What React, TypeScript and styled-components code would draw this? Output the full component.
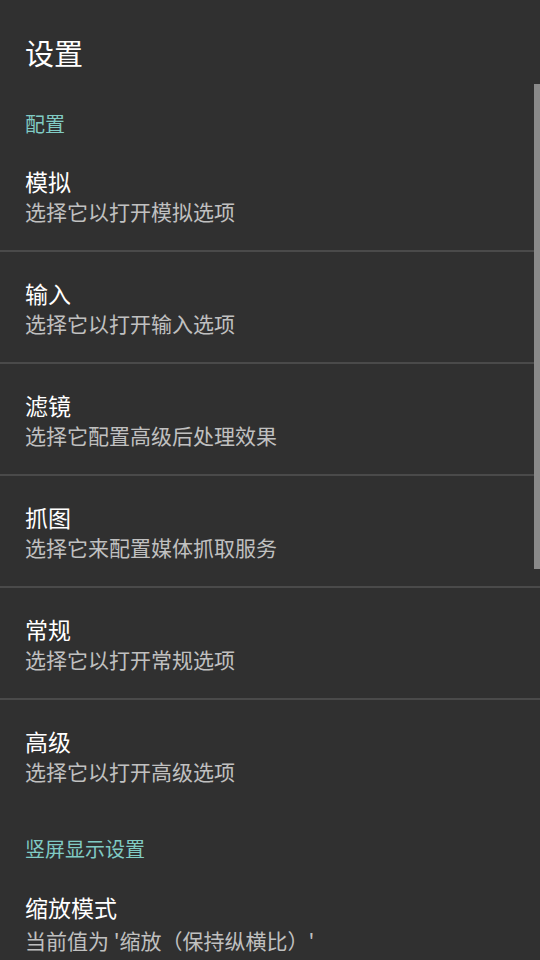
import React from "react";
import styled, { createGlobalStyle } from "styled-components";

const GlobalStyle = createGlobalStyle`
  html, body {
    margin: 0;
    padding: 0;
    background: #303030;
  }
  body {
    font-family: "Noto Sans CJK SC", "Noto Sans", Roboto, sans-serif;
    -webkit-font-smoothing: antialiased;
  }
  * { box-sizing: border-box; }
`;

const Screen = styled.div`
  width: 540px;
  height: 960px;
  overflow: hidden;
  background: #303030;
  display: flex;
  flex-direction: column;
`;

const Toolbar = styled.header`
  height: 84px;
  padding: 34px 25px 0;
  flex-shrink: 0;
`;

const Title = styled.h1`
  margin: 0;
  font-size: 29px;
  line-height: 36px;
  font-weight: 400;
  color: #ffffff;
`;

const ListWrap = styled.div`
  position: relative;
  flex: 1;
  overflow: hidden;
`;

const List = styled.div`
  display: flex;
  flex-direction: column;
`;

const ScrollThumb = styled.div`
  position: absolute;
  top: 0;
  right: 0;
  width: 6px;
  height: 485px;
  background: #8a8a8a;
`;

const CategoryTitle = styled.div`
  padding: 24.5px 25px 1px;
  font-size: 20px;
  line-height: 30px;
  color: #80cbc4;
`;

const Item = styled.div<{ $divider?: boolean }>`
  height: ${(p) => (p.$divider ? 112 : 110)}px;
  padding: 26.5px 25px 0;
  display: flex;
  flex-direction: column;
  border-bottom: ${(p) => (p.$divider ? "2px solid #4a4a4a" : "none")};
`;

const ItemTitle = styled.div`
  font-size: 23px;
  line-height: 30px;
  color: #ffffff;
`;

const ItemSummary = styled.div<{ $gap?: number }>`
  margin-top: ${(p) => p.$gap ?? 0}px;
  font-size: 21px;
  line-height: 30px;
  color: #c0c0c0;
  white-space: nowrap;
`;

type Pref = { title: string; summary: string; gap?: number };

const config: Pref[] = [
  { title: "模拟", summary: "选择它以打开模拟选项" },
  { title: "输入", summary: "选择它以打开输入选项" },
  { title: "滤镜", summary: "选择它配置高级后处理效果" },
  { title: "抓图", summary: "选择它来配置媒体抓取服务" },
  { title: "常规", summary: "选择它以打开常规选项" },
  { title: "高级", summary: "选择它以打开高级选项" },
];

const portrait: Pref[] = [
  { title: "缩放模式", summary: "当前值为 '缩放（保持纵横比）'", gap: 3.5 },
];

const Category = ({ name, prefs }: { name: string; prefs: Pref[] }) => (
  <>
    <CategoryTitle>{name}</CategoryTitle>
    {prefs.map((p, i) => (
      <Item key={p.title} $divider={i < prefs.length - 1}>
        <ItemTitle>{p.title}</ItemTitle>
        <ItemSummary $gap={p.gap}>{p.summary}</ItemSummary>
      </Item>
    ))}
  </>
);

export default function App() {
  return (
    <>
      <GlobalStyle />
      <Screen>
        <Toolbar>
          <Title>设置</Title>
        </Toolbar>
        <ListWrap>
          <List>
            <Category name="配置" prefs={config} />
            <Category name="竖屏显示设置" prefs={portrait} />
          </List>
          <ScrollThumb />
        </ListWrap>
      </Screen>
    </>
  );
}
